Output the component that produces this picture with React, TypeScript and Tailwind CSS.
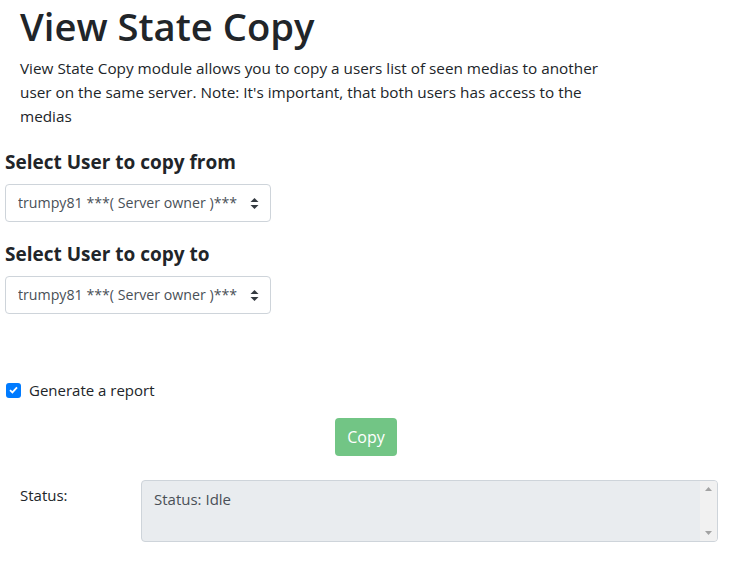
import React from "react";

const font = { fontFamily: '"Open Sans", "Noto Sans", Arial, sans-serif' };

function UserSelect() {
  return (
    <div className="relative w-[266px]">
      <select
        defaultValue="trumpy81"
        className="h-[38px] w-full appearance-none rounded-[4px] border border-[#ced4da] bg-white pl-[12px] pr-[24px] text-[14.2px] text-[#495057] outline-none"
      >
        <option value="trumpy81">trumpy81 ***( Server owner )***</option>
      </select>
      <svg
        className="pointer-events-none absolute right-[12px] top-[14px]"
        width="9"
        height="11"
        viewBox="0 0 9 11"
      >
        <path d="M4.5 0 L8.5 4 H0.5 Z M0.5 7 H8.5 L4.5 11 Z" fill="#343a40" />
      </svg>
    </div>
  );
}

export default function App() {
  return (
    <div className="min-h-[562px] w-[732px] bg-white text-[#212529]" style={font}>
      {/* 标题与说明 */}
      <div className="px-[20px] pt-[2px]">
        <h1 className="text-[38.2px] font-semibold leading-[48px]">View State Copy</h1>
        <p className="mt-[6px] w-[600px] text-[15.3px] leading-[24px]">
          View State Copy module allows you to copy a users list of seen medias to another user on the
          same server. Note: It's important, that both users has access to the medias
        </p>
      </div>

      {/* 用户选择 */}
      <div className="px-[5px]">
        <h5 className="mt-[22px] text-[19px] font-bold leading-[24px]">Select User to copy from</h5>
        <div className="mt-[10px]">
          <UserSelect />
        </div>
        <h5 className="mt-[20px] text-[19px] font-bold leading-[24px]">Select User to copy to</h5>
        <div className="mt-[10px]">
          <UserSelect />
        </div>

        <label className="mt-[64px] flex items-center gap-[8px] text-[15px] leading-[24px]">
          <span className="ml-[1px] flex h-[15px] w-[15px] items-center justify-center rounded-[3px] bg-[#007bff]">
            <svg width="9" height="8" viewBox="0 0 9 8">
              <path d="M1 4.2 L3.4 6.4 L8 1.4" stroke="white" strokeWidth="1.8" fill="none" />
            </svg>
          </span>
          Generate a report
        </label>
      </div>

      {/* 按钮 */}
      <div className="mt-[16px] flex justify-center">
        <button
          disabled
          className="h-[38px] w-[62px] rounded-[4px] bg-[#28a745] text-[16px] text-white opacity-65"
        >
          Copy
        </button>
      </div>

      {/* 状态 */}
      <div className="mt-[24px] flex items-start pl-[20px]">
        <div className="w-[121px] pt-[3px] text-[15px] leading-[24px]">Status:</div>
        <div className="relative h-[62px] w-[577px]">
          <textarea
            readOnly
            value="Status: Idle"
            className="h-full w-full resize-none overflow-hidden rounded-[4px] border border-[#ced4da] bg-[#e9ecef] py-[6px] pl-[12px] pr-[30px] text-[15px] leading-[24px] text-[#495057] outline-none"
          />
          {/* 滚动条 */}
          <div className="pointer-events-none absolute bottom-[1px] right-[1px] top-[1px] flex w-[17px] flex-col items-center justify-between rounded-r-[3px] bg-[#f1f1f1] py-[6px]">
            <svg width="7" height="4" viewBox="0 0 7 4">
              <path d="M3.5 0 L7 4 H0 Z" fill="#a3a3a3" />
            </svg>
            <svg width="7" height="4" viewBox="0 0 7 4">
              <path d="M0 0 H7 L3.5 4 Z" fill="#a3a3a3" />
            </svg>
          </div>
        </div>
      </div>
    </div>
  );
}
